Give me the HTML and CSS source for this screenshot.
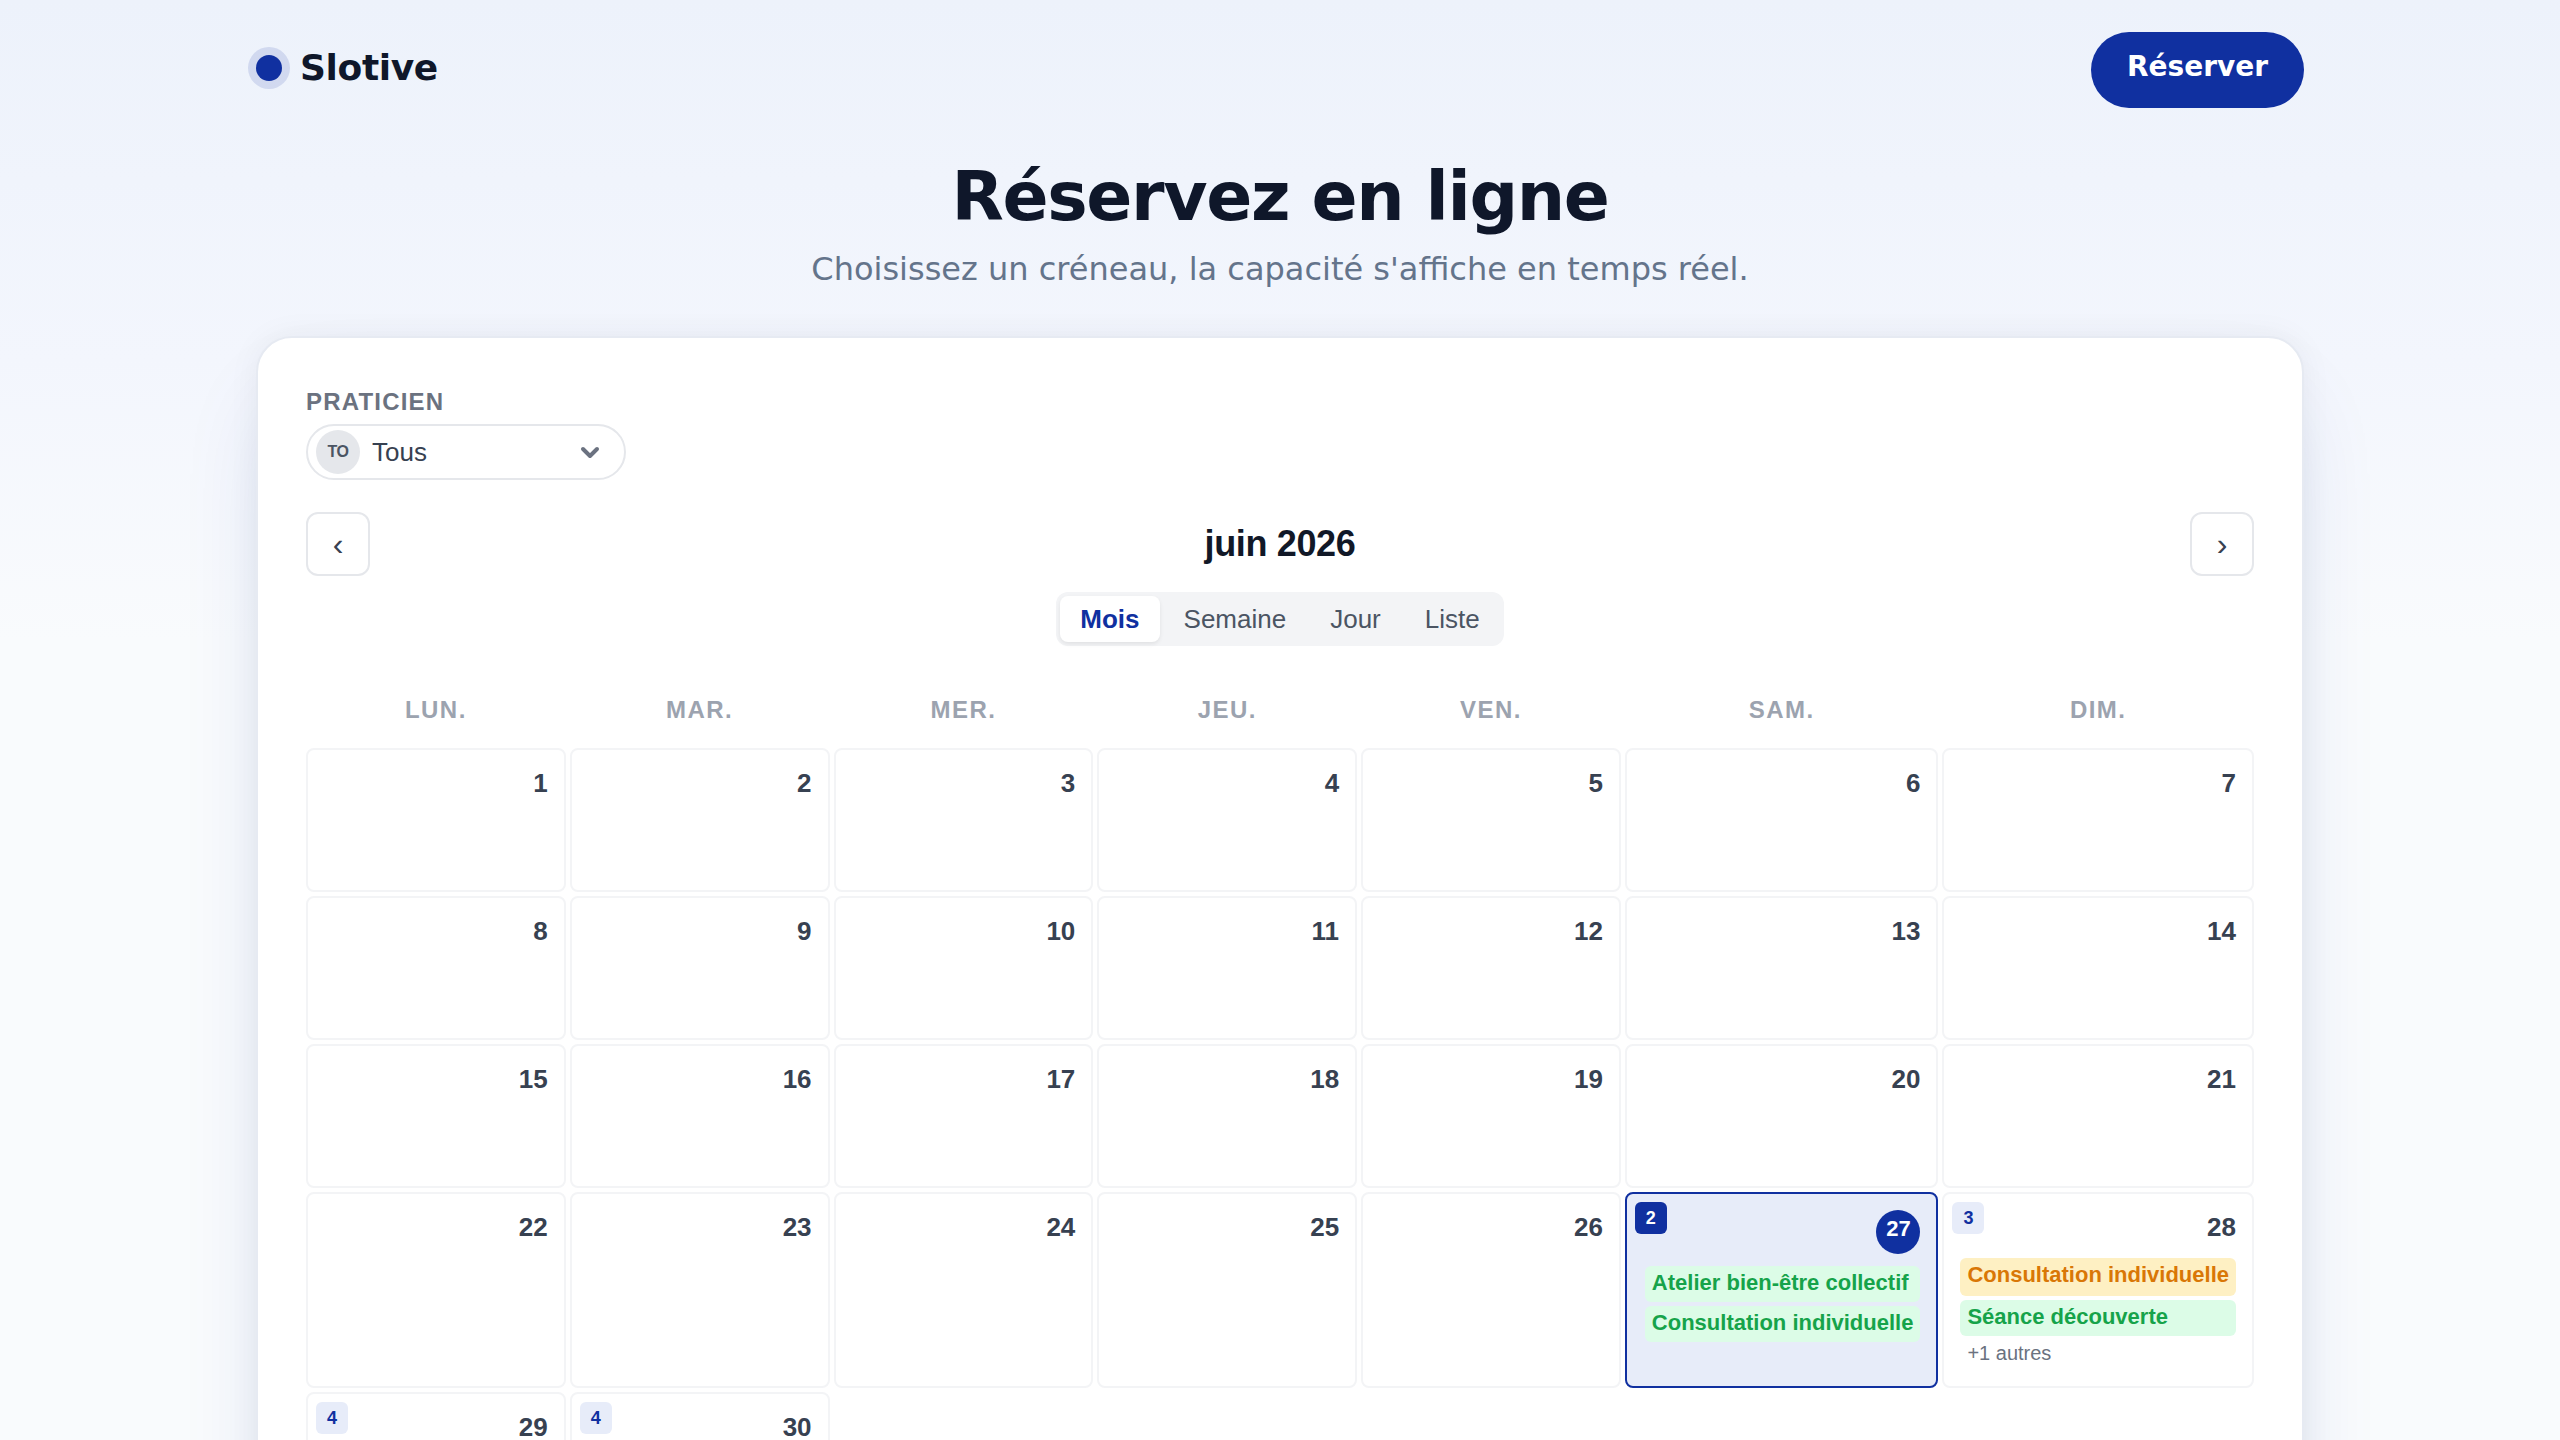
FILE: index.html
```html
<!DOCTYPE html>
<html lang="fr">
<head>
<meta charset="utf-8">
<meta name="viewport" content="width=device-width, initial-scale=1">
<title>Slotive – Réservez en ligne</title>
<link rel="stylesheet" href="styles.css">
</head>
<body>
<header class="topbar">
  <a class="brand" href="#"><span class="brand-dot"></span>Slotive</a>
  <a class="cta" href="#reserver">Réserver</a>
</header>
<main class="page">
  <div class="hero">
    <h1 class="hero-title">Réservez en ligne</h1>
    <p class="hero-text">Choisissez un créneau, la capacité s'affiche en temps réel.</p>
  </div>
  <section class="card" id="reserver">
    <div class="field">
      <label class="field-label" for="praticien">Praticien</label>
      <div class="picker">
        <span class="avatar" aria-hidden="true">TO</span>
        <select class="picker-select" id="praticien"><option>Tous</option></select>
        <svg class="picker-chevron" viewBox="0 0 24 24" aria-hidden="true"><path d="M5 9l7 7 7-7"/></svg>
      </div>
    </div>
    <div class="month-nav">
      <button class="nav-button" type="button" aria-label="Mois précédent">‹</button>
      <h2 class="month-title">juin 2026</h2>
      <button class="nav-button" type="button" aria-label="Mois suivant">›</button>
    </div>
    <div class="views">
      <button class="view view-active" type="button">Mois</button>
      <button class="view" type="button">Semaine</button>
      <button class="view" type="button">Jour</button>
      <button class="view" type="button">Liste</button>
    </div>
    <div class="calendar">
      <div class="weekday">lun.</div>
      <div class="weekday">mar.</div>
      <div class="weekday">mer.</div>
      <div class="weekday">jeu.</div>
      <div class="weekday">ven.</div>
      <div class="weekday">sam.</div>
      <div class="weekday">dim.</div>
      <div class="day"><span class="number">1</span></div>
      <div class="day"><span class="number">2</span></div>
      <div class="day"><span class="number">3</span></div>
      <div class="day"><span class="number">4</span></div>
      <div class="day"><span class="number">5</span></div>
      <div class="day"><span class="number">6</span></div>
      <div class="day"><span class="number">7</span></div>
      <div class="day"><span class="number">8</span></div>
      <div class="day"><span class="number">9</span></div>
      <div class="day"><span class="number">10</span></div>
      <div class="day"><span class="number">11</span></div>
      <div class="day"><span class="number">12</span></div>
      <div class="day"><span class="number">13</span></div>
      <div class="day"><span class="number">14</span></div>
      <div class="day"><span class="number">15</span></div>
      <div class="day"><span class="number">16</span></div>
      <div class="day"><span class="number">17</span></div>
      <div class="day"><span class="number">18</span></div>
      <div class="day"><span class="number">19</span></div>
      <div class="day"><span class="number">20</span></div>
      <div class="day"><span class="number">21</span></div>
      <div class="day"><span class="number">22</span></div>
      <div class="day"><span class="number">23</span></div>
      <div class="day"><span class="number">24</span></div>
      <div class="day"><span class="number">25</span></div>
      <div class="day"><span class="number">26</span></div>
      <div class="day day-today">
        <span class="count">2</span>
        <span class="number">27</span>
        <div class="events">
          <a class="event" href="#">Atelier bien-être collectif</a>
          <a class="event" href="#">Consultation individuelle</a>
        </div>
      </div>
      <div class="day">
        <span class="count">3</span>
        <span class="number">28</span>
        <div class="events">
          <a class="event event-low" href="#">Consultation individuelle</a>
          <a class="event" href="#">Séance découverte</a>
          <span class="more">+1 autres</span>
        </div>
      </div>
      <div class="day day-busy"><span class="count">4</span><span class="number">29</span></div>
      <div class="day day-busy"><span class="count">4</span><span class="number">30</span></div>
    </div>
  </section>
</main>
</body>
</html>
```
FILE: styles.css
```css
* { box-sizing: border-box; }

:root {
  --primary: #1030a0;
  --primary-soft: #e7ecf9;
  --ink: #0f172a;
  --line: #e5e7eb;
  --cell-line: #f3f4f6;
}

html { background: #f9fbfd; }

body {
  margin: 0;
  min-height: 100vh;
  overflow-x: hidden;
  background: linear-gradient(180deg, #edf2fb 0, #f3f6fd 360px, #f9fbfd 640px);
  color: var(--ink);
  font-family: "DejaVu Sans", sans-serif;
}

.topbar,
.page {
  width: 80%;
  margin: 0 auto;
}

.topbar {
  display: flex;
  justify-content: space-between;
  align-items: flex-start;
  padding-top: 32px;
}

.brand {
  display: flex;
  align-items: center;
  gap: 18px;
  padding: 16px 0;
  color: var(--ink);
  font-size: 36px;
  font-weight: 700;
  line-height: 40px;
  letter-spacing: -0.01em;
  text-decoration: none;
}

.brand-dot {
  width: 26px;
  height: 26px;
  border-radius: 50%;
  background: var(--primary);
  box-shadow: 0 0 0 8px rgba(16, 48, 160, 0.13);
}

.cta {
  padding: 18px 36px 24px;
  border-radius: 38px;
  background: var(--primary);
  color: #fff;
  font-size: 28px;
  font-weight: 700;
  line-height: 34px;
  text-decoration: none;
}

.hero {
  padding: 48px 0 44px;
  text-align: center;
}

.hero-title {
  margin: 0;
  font-size: 68px;
  font-weight: 700;
  line-height: 82px;
  letter-spacing: -0.02em;
}

.hero-text {
  margin: 8px 0 0;
  color: #64748b;
  font-size: 32px;
  line-height: 46px;
}

.card {
  padding: 48px;
  border: 2px solid #e6eaf2;
  border-radius: 36px;
  background: #fff;
  box-shadow: 0 48px 96px -24px rgba(16, 48, 160, 0.16), 0 0 32px rgba(15, 23, 42, 0.05);
  font-family: "Liberation Sans", sans-serif;
}

.field-label {
  display: block;
  margin-bottom: 6px;
  color: #6b7280;
  font-size: 24px;
  font-weight: 700;
  line-height: 32px;
  letter-spacing: 0.05em;
  text-transform: uppercase;
}

.picker {
  display: flex;
  align-items: center;
  width: 320px;
  height: 56px;
  padding: 0 22px 0 8px;
  border: 2px solid var(--line);
  border-radius: 28px;
}

.avatar {
  width: 44px;
  flex: none;
  border-radius: 50%;
  background: var(--line);
  color: #4b5563;
  font-size: 16px;
  font-weight: 700;
  line-height: 44px;
  letter-spacing: -0.03em;
  text-align: center;
}

.picker-select {
  flex: 1;
  min-width: 0;
  height: 44px;
  padding: 0 12px;
  border: 0;
  background: none;
  color: #374151;
  font: 26px/44px "Liberation Sans", sans-serif;
  appearance: none;
}

.picker-chevron {
  width: 24px;
  height: 24px;
  fill: none;
  stroke: #6b7280;
  stroke-width: 4;
  stroke-linecap: round;
  stroke-linejoin: round;
}

.month-nav {
  display: flex;
  justify-content: space-between;
  align-items: center;
  margin-top: 32px;
}

.nav-button {
  width: 64px;
  height: 64px;
  padding: 0;
  border: 2px solid var(--line);
  border-radius: 12px;
  background: #fff;
  color: #374151;
  font: 32px/60px "Liberation Sans", sans-serif;
}

.month-title {
  margin: 0;
  color: #111827;
  font-size: 36px;
  font-weight: 700;
  line-height: 40px;
  letter-spacing: -0.01em;
}

.views {
  display: flex;
  gap: 4px;
  width: fit-content;
  margin: 16px auto 0;
  padding: 4px;
  border-radius: 12px;
  background: #f3f4f6;
}

.view {
  height: 46px;
  padding: 0 20px;
  border: 0;
  border-radius: 8px;
  background: none;
  color: #4b5563;
  font: 26px/46px "Liberation Sans", sans-serif;
}

.view-active {
  background: #fff;
  box-shadow: 0 2px 4px rgba(0, 0, 0, 0.08);
  color: var(--primary);
  font-weight: 700;
}

.calendar {
  display: grid;
  grid-template-columns: repeat(7, 1fr);
  gap: 4px;
  margin-top: 32px;
}

.weekday {
  padding: 16px 0 18px;
  color: #9ca3af;
  font-size: 24px;
  font-weight: 700;
  line-height: 32px;
  letter-spacing: 0.06em;
  text-align: center;
  text-transform: uppercase;
}

.day {
  position: relative;
  min-height: 144px;
  padding: 16px 16px 20px;
  border: 2px solid var(--cell-line);
  border-radius: 8px;
  text-align: right;
}

.day-busy { min-height: 196px; }

.number {
  display: block;
  color: #374151;
  font-size: 26px;
  font-weight: 700;
  line-height: 34px;
}

.count {
  position: absolute;
  top: 8px;
  left: 8px;
  min-width: 32px;
  height: 32px;
  border-radius: 6px;
  background: var(--primary-soft);
  color: var(--primary);
  font-size: 18px;
  font-weight: 700;
  line-height: 32px;
  text-align: center;
}

.events {
  display: grid;
  gap: 4px;
  margin-top: 14px;
  text-align: left;
}

.event {
  padding: 0 7px 2px;
  border-radius: 6px;
  background: #dcfce7;
  color: #16a34a;
  font-size: 22px;
  font-weight: 700;
  line-height: 34px;
  text-decoration: none;
  white-space: nowrap;
}

.event-low {
  padding-bottom: 4px;
  background: #fef0c3;
  color: #d97706;
}

.more {
  padding: 0 7px;
  color: #6b7280;
  font-size: 20px;
  line-height: 26px;
}

.day-today {
  padding-left: 18px;
  border-color: var(--primary);
  background: var(--primary-soft);
}

.day-today .number {
  width: 44px;
  height: 44px;
  margin-left: auto;
  border-radius: 50%;
  background: var(--primary);
  color: #fff;
  font-size: 22px;
  line-height: 38px;
  text-align: center;
}

.day-today .events { margin-top: 12px; }

.day-today .count {
  background: var(--primary);
  color: #fff;
}
```
